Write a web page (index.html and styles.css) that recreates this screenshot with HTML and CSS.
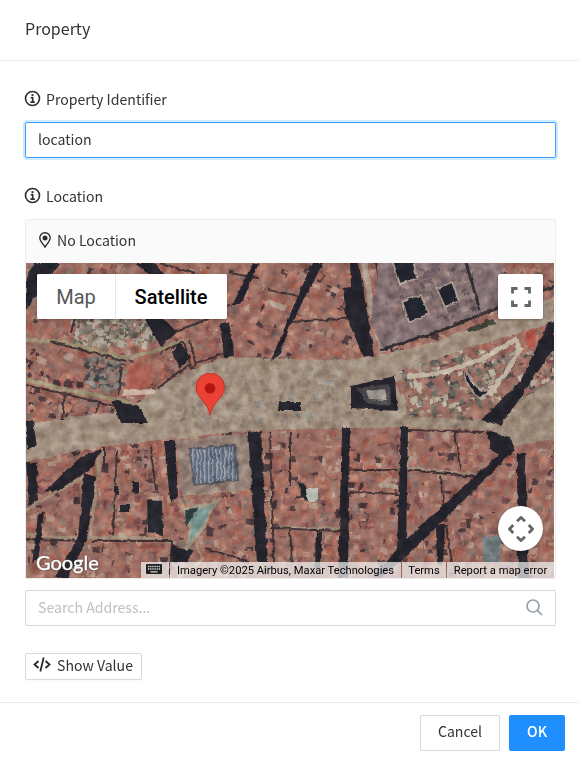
FILE: index.html
```html
<!DOCTYPE html>
<html lang="en">
<head>
<meta charset="utf-8">
<title>Property</title>
<link rel="stylesheet" href="styles.css">
</head>
<body>
<div class="modal">
  <header class="modal-header"><h1>Property</h1></header>
  <main class="modal-body">
    <label class="label">
      <svg class="info" viewBox="0 0 16 16"><circle cx="7.500" cy="7.500" r="7"/><path d="M5.700 6.700h2v4.300M5.400 11.100h4.400"/><rect x="6.500" y="3.200" width="2" height="2"/></svg>
      <span>Property Identifier</span>
    </label>
    <input class="input focused" type="text" value="location">
    <label class="label second">
      <svg class="info" viewBox="0 0 16 16"><circle cx="7.500" cy="7.500" r="7"/><path d="M5.700 6.700h2v4.300M5.400 11.100h4.400"/><rect x="6.500" y="3.200" width="2" height="2"/></svg>
      <span>Location</span>
    </label>
    <section class="card">
      <div class="card-head">
        <svg class="pin" viewBox="0 0 12 16"><path d="M6 15.1C4.2 12.2.8 8.900.8 6a5.2 5.2 0 0 1 10.4 0c0 2.900-3.400 6.200-5.200 9.100z"/><circle cx="6" cy="6" r="2.500"/></svg>
        <span>No Location</span>
      </div>
      <div class="map">
        <svg class="imagery" viewBox="26 263 528 315" preserveAspectRatio="none">
          <defs>
            <filter id="rough" x="0" y="0" width="100%" height="100%" color-interpolation-filters="sRGB">
              <feTurbulence type="fractalNoise" baseFrequency=".13" numOctaves="3" seed="4" result="n"/>
              <feDisplacementMap in="SourceGraphic" in2="n" scale="4" xChannelSelector="R" yChannelSelector="G"/>
              <feGaussianBlur stdDeviation=".7"/>
            </filter>
            <filter id="grain" x="0" y="0" width="100%" height="100%" color-interpolation-filters="sRGB">
              <feTurbulence type="fractalNoise" baseFrequency=".1" numOctaves="4" seed="9"/>
              <feColorMatrix values="1.200 .5 0 0 -.28  1.100 .6 0 0 -.28  1 .6 .1 0 -.28  0 0 0 0 1"/>
            </filter>
            <pattern id="stripes" width="4" height="8" patternUnits="userSpaceOnUse"><rect width="4" height="8" fill="#5c6577"/><rect width="1.500" height="8" fill="#8d94a0"/></pattern>
          </defs>
          <g filter="url(#rough)">
            <rect x="16" y="253" width="548" height="335" fill="#96695f"/>
            <g id="roofs"></g>
            <path fill="#9c8a7a" d="M26 425 60 418 120 412 140 402 160 385 192 370 226 357 280 359 330 360 364 358 395 352 440 340 500 318 554 297V322L520 332 450 354 400 371 390 378 405 400 408 424 400 427 260 430 176 438 90 448 26 462Z"/>
            <path fill="#958474" d="M400 415 470 420 505 420 520 400 554 380V440L510 446 488 430 400 427Z"/>
            <g id="plaza"></g>
            <g fill="none" stroke="#96896f" stroke-width="4">
              <path d="M26 340 62 342 126 358 152 352 185 340M26 380 60 388 130 402"/>
              <path stroke="#a38f80" stroke-width="6" d="M364 263 374 320 383 352"/>
              <path stroke="#9c8977" stroke-width="3" d="M86 537 150 538 176 543M90 538 98 465 104 448M26 510 86 475M408 428V468L476 475M198 435 178 438 183 495 250 488M180 499 202 560 178 578M184 498 200 510 215 505M271 488V528L340 529M26 535 86 539"/>
            </g>
            <g fill="none" stroke="#3d3033" stroke-width="2">
              <path d="M50 342 126 361M75 318 71 332M122 367 118 394M190 340 196 366M165 350 184 342 190 364 158 388M173 332 227 312M190 318 230 305M196 363 224 354M26 385 120 407M65 392 62 420M100 401 95 414M104 448V470M117 450 113 535M150 445 156 490M270 432 274 563M270 528 340 531M350 492 398 494M408 470 478 477M440 477 444 507M455 432 460 470M408 430 484 432M290 432V486M350 470H398M290 530 292 563M26 539 86 541M172 541 170 575M92 541H172M205 548 250 562M446 525 452 562M160 263 196 274M229 273 258 278M268 290 305 297M290 322 358 318M376 263 392 352"/>
            </g>
            <g fill="#24232b">
              <path d="M34 263H60L40 290 26 310V280ZM136 263H154L166 276 150 276ZM143 316 163 318 177 332 161 347ZM180 342 191 358 180 368 172 352ZM252 263H259L243 300 232 307ZM312 263H323L289 328 280 355 271 360ZM350 263H359L374 355 364 358 346 316 343 288 351 287ZM220 323 229 323 235 355 224 358Z"/>
              <path d="M112 400 138 405 148 423 120 423ZM26 420 33 420 37 446 28 450ZM26 462 37 463 38 500 29 505ZM44 492 82 456 101 450 95 465 58 491ZM84 473 96 477 87 539 68 578 55 578 78 537ZM164 441 175 441 178 497 170 500ZM247 433 261 431 268 562 257 562ZM342 427H350L348 578 338 578ZM401 427H408L406 550 397 550ZM505 449 513 452 406 557 380 578 374 578 400 545ZM517 453H525L529 578 518 578ZM486 431 510 437 515 451 501 456 490 447Z"/>
              <path d="M548 323 554 322V348L516 404 500 425 481 420 520 382ZM351 386 395 376 397 411 351 408ZM280 402 301 402 301 411 279 411ZM38 515 44 510 39 555 32 565ZM316 532 322 532 321 568 315 568ZM436 526 445 524 443 565 437 565ZM171 545 194 550 187 562 172 562Z"/>
            </g>
            <path fill="#806d6f" d="M379 263H500L515 292 500 305 385 350 371 325Z"/>
            <g id="palace"></g>
            <g fill="#21242c" stroke="#a8968e" stroke-width="1.800">
              <path d="M392 260 413 260 417 278 400 284ZM402 301 421 295 429 314 409 322ZM437 289 452 282 459 301 445 307Z"/>
              <path d="M467 370Q471 388 489 392L481 398Q467 391 465 372Z"/>
            </g>
            <path fill="none" stroke="#302d32" stroke-width="3" d="M380 350 434 333 500 307 554 286M466 263 480 310"/>
            <path fill="#3e3e35" d="M466 329 494 319 495 324 470 333Z"/>
            <path fill="#47444a" d="M357 388 390 384 391 406 366 402Z"/>
            <path fill="#918b82" d="M366 391 385 389 387 400 369 399Z"/>
            <path fill="none" stroke="#c0b2a0" stroke-width="5" d="M407 377 445 372 484 358 515 340 520 349 505 374 488 396"/>
            <path fill="#a94f43" d="M525 332 537 328 535 346 528 350Z"/>
            <path fill="#8f7c72" d="M176 441 248 433 252 488 182 495Z"/>
            <path fill="url(#stripes)" stroke="#55565e" stroke-width="2" d="M190 449 235 445 238 480 194 485Z"/>
            <path fill="#b6bbb0" d="M304 488H318V500L307 502Z"/>
            <path fill="#24262c" d="M298 481 305 486 308 502 301 497ZM147 500 162 501 163 535 148 532ZM120 504H130V512H120ZM132 482 139 482 139 493 132 492ZM114 487H119V494H114Z"/>
            <path fill="#74908b" stroke="#9e937e" stroke-width="3" d="M186 509 200 507 217 501 202 529 186 550 190 528Z"/>
            <path fill="#2e4143" d="M185 509 198 508 186 527Z"/>
            <path fill="#c9b0a0" d="M124 390 156 389 155 394 122 396Z"/>
            <path fill="#a85d51" d="M129 366 151 364 152 387 126 389Z"/>
            <path fill="#a99686" d="M380 482 398 484 398 489 380 487ZM268 300 286 305 284 310 270 307Z"/>
            <path fill="#6c777a" d="M482 536H501V562H484Z"/>
          </g>
          <rect class="grain" x="26" y="263" width="528" height="315" filter="url(#grain)"/>
        </svg>
        <div class="map-type"><button>Map</button><button class="on">Satellite</button></div>
        <button class="fullscreen"><svg viewBox="0 0 20 20"><path d="M1.500 6.500V1.500h5M13.500 1.500h5v5M18.500 13.500v5h-5M6.500 18.500h-5v-5"/></svg></button>
        <svg class="marker" viewBox="0 0 30 43"><path d="M15 42C13.500 33 8 29 4 23A14.200 14.200 0 1 1 26.500 23C22 29 16.500 33 15 42z"/><circle cx="15" cy="15.300" r="5.300"/></svg>
        <button class="pan"><svg viewBox="0 0 26 26"><path d="M9 5.200 13 1.500 17 5.200M9 20.800 13 24.500 17 20.800M5.200 9 1.500 13 5.200 17M20.800 9 24.500 13 20.800 17"/></svg></button>
        <div class="google">Google</div>
        <div class="credits">
          <span class="keys"><svg viewBox="0 0 16 10"><rect width="16" height="10" rx="1" fill="#222"/><path d="M2 2.500h12M2 5h12" stroke="#ddd" stroke-width="1.300" stroke-dasharray="1.300 .85"/><path d="M4.500 7.900h7" stroke="#ddd" stroke-width="1.200"/></svg></span>
          <span class="imgcredit">Imagery ©2025 Airbus, Maxar Technologies</span><span class="terms">Terms</span><span class="report">Report a map error</span>
        </div>
      </div>
    </section>
    <div class="search">
      <input type="text" placeholder="Search Address...">
      <svg viewBox="0 0 17 17"><circle cx="7" cy="7" r="6"/><path d="M11.300 11.300 16 16"/></svg>
    </div>
    <button class="show"><svg viewBox="0 0 18 16"><path d="M5.500 4 1.500 7.500 5.500 11M12.500 4 16.500 7.500 12.500 11M10.700 .5 7.300 14.500"/></svg><span>Show Value</span></button>
  </main>
  <footer class="modal-footer"><button class="cancel">Cancel</button><button class="ok">OK</button></footer>
</div>
<script src="map.js"></script>
</body>
</html>
```
FILE: styles.css
```css
* { box-sizing: border-box; }
body { margin: 0; background: #fff; color: #333; font: 14.1px/22px "Noto Sans CJK SC", sans-serif; }
button, input { font: inherit; color: inherit; margin: 0; padding: 0; border: 0; background: #fff; border-radius: 2px; }
svg { display: block; fill: none; flex: none; }
.modal { height: 759px; display: flex; flex-direction: column; overflow: hidden; }
.modal-header { height: 61px; padding: 16px 25px; border-bottom: 1px solid #ececec; }
h1 { margin: 0; font-size: 16px; line-height: 24px; font-weight: 400; }
.modal-body { flex: 1; display: flex; flex-direction: column; padding: 27px 23px 0 25px; }
.label { display: flex; align-items: center; gap: 5px; height: 22px; }
.label.second { margin-top: 27px; }
.info { width: 16px; height: 16px; stroke: #2c2c2c; stroke-width: 1.600; overflow: visible; }
.info rect { fill: #2c2c2c; stroke: none; }
.input { height: 36px; margin-top: 12px; padding: 0 12px 2px; border: 1px solid #d9d9d9; outline: none; }
.input.focused { border-color: #40a0ff; box-shadow: 0 0 0 2px rgba(24,144,255,.2); }
.card { margin-top: 12px; border: 1px solid #eee; border-radius: 2px 2px 0 0; height: 360px; }
.card-head { display: flex; align-items: center; gap: 6px; height: 43px; padding: 0 13px 3px; background: #fafafa; }
.pin { width: 12px; height: 16px; stroke: #2c2c2c; stroke-width: 1.400; }
.pin circle { fill: #2c2c2c; stroke: none; }
.map { position: relative; width: 528px; height: 315px; overflow: hidden; font-family: Roboto, sans-serif; }
.imagery { width: 528px; height: 315px; }
.grain { mix-blend-mode: overlay; opacity: .28; }
.map-type { position: absolute; left: 11px; top: 11px; display: flex; height: 45px; border-radius: 2px; overflow: hidden; background: #fff; box-shadow: 0 1px 3px rgba(0,0,0,.3); }
.map-type button { width: 78px; font-size: 20px; color: #565656; border-radius: 0; }
.map-type .on { width: 112px; color: #000; font-weight: 500; border-left: 1px solid #e8e8e8; padding-right: 1px; }
.fullscreen, .pan { position: absolute; right: 11px; width: 45px; height: 45px; display: grid; place-items: center; box-shadow: 0 1px 3px rgba(0,0,0,.3); }
.fullscreen { top: 11px; }
.fullscreen svg { width: 20px; height: 20px; stroke: #666; stroke-width: 2.800; }
.pan { top: 243px; border-radius: 50%; }
.pan svg { width: 26px; height: 26px; stroke: #666; stroke-width: 2.800; }
.marker { position: absolute; left: 169px; top: 110px; width: 30px; height: 43px; fill: #ea4335; stroke: #c5221f; stroke-width: .8; }
.marker circle { fill: #b31412; stroke: none; }
.google { position: absolute; left: 10px; top: 288px; color: #fff; font: 400 20px/22px Lato, sans-serif; -webkit-text-stroke: .4px #fff; text-shadow: 0 0 2px #333, 0 0 1px #333; }
.credits { position: absolute; right: 0; bottom: 0; display: flex; height: 16px; font-size: 11.200px; line-height: 17px; color: #000; white-space: nowrap; }
.credits span { background: rgba(245,245,245,.7); margin-left: 1px; text-align: center; }
.credits .keys { width: 28px; margin: 0; padding: 2px 5px; }
.keys svg { width: 16px; height: 10px; }
.credits .imgcredit { width: 231px; }
.credits .terms { width: 44px; }
.credits .report { width: 107px; }
.search { margin-top: 11px; height: 36px; border: 1px solid #d9d9d9; border-radius: 2px; display: flex; align-items: center; padding: 0 12px 2px; }
.search input { flex: 1; min-width: 0; height: 32px; padding-bottom: 1px; }
.search input::placeholder { color: #bfbfbf; opacity: 1; }
.search svg { width: 17px; height: 17px; stroke: #90a0ad; stroke-width: 1.700; }
.show { align-self: flex-start; margin-top: 27px; width: 117px; height: 27px; border: 1px solid #d9d9d9; box-shadow: 0 2px 0 rgba(0,0,0,.016); display: flex; align-items: center; gap: 6px; padding: 0 7px 3px; white-space: nowrap; }
.show svg { width: 18px; height: 16px; stroke: #2c2c2c; stroke-width: 1.800; }
.modal-footer { height: 57px; border-top: 1px solid #ececec; display: flex; justify-content: flex-end; gap: 9px; padding: 12px 14px 0 0; }
.modal-footer button { height: 36px; padding-bottom: 4px; }
.cancel { width: 80px; border: 1px solid #d9d9d9; }
.modal-footer .ok { width: 56px; color: #fff; background: #1f8fff; font-weight: 500; }
```
FILE: map.js
```js
// Scatters roof, paving and facade details over the aerial view.
let seed = 37;
const rnd = () => (seed = (seed * 16807) % 2147483647) / 2147483647;
function scatter(id, count, [x, y, w, h], colors, max, angle) {
  const g = document.getElementById(id);
  for (let i = 0; i < count; i++) {
    const r = document.createElementNS("http://www.w3.org/2000/svg", "rect");
    const px = x + rnd() * w, py = y + rnd() * h;
    r.setAttribute("x", px);
    r.setAttribute("y", py);
    r.setAttribute("width", 1.5 + rnd() * max);
    r.setAttribute("height", 1.5 + rnd() * max);
    r.setAttribute("fill", colors[Math.floor(rnd() * colors.length)]);
    r.setAttribute("transform", `rotate(${angle} ${px} ${py})`);
    g.appendChild(r);
  }
}
const tiles = ["#a96a5b", "#9d5b4e", "#7d5050", "#b37c6b", "#806964", "#ab8b7c", "#93625a", "#4b383b", "#a16657", "#8d6d64", "#93665a"];
scatter("roofs", 1500, [26, 263, 528, 110], tiles, 7, 25);
scatter("roofs", 700, [26, 373, 140, 80], tiles, 7, 12);
scatter("roofs", 2200, [26, 430, 528, 150], tiles, 7, 3);
scatter("roofs", 420, [390, 350, 164, 72], ["#a59586", "#7e756b", "#beb2a2", "#8f6a5c", "#66675c", "#4d494b"], 6, -20);
scatter("roofs", 260, [72, 315, 80, 28], ["#968b7c", "#7b7369", "#aa9d8f", "#5f5c52"], 5, 15);
scatter("roofs", 120, [85, 355, 38, 32], ["#77706b", "#66615f", "#8a8179", "#484548"], 5, 15);
scatter("palace", 200, [385, 268, 90, 50], ["#746264", "#8e7a76", "#806863", "#625458"], 5, -20);
scatter("plaza", 260, [175, 367, 190, 56], ["#a08d7d", "#8b7b6d", "#a79686", "#85807b", "#8f7b70"], 5, -8);
```
